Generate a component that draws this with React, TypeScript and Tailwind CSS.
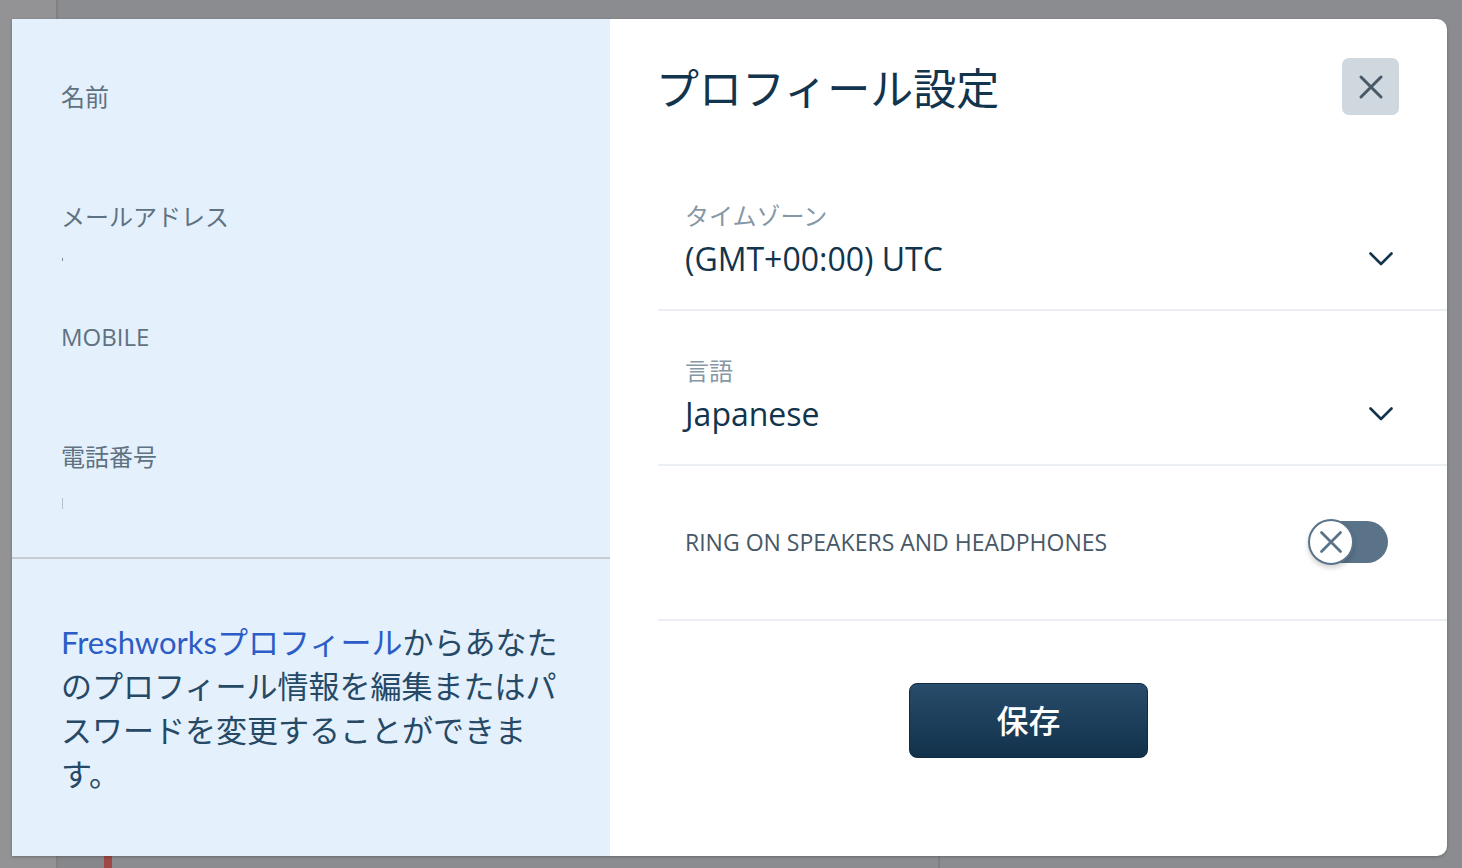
import React from "react";

function Field({ label, tick }: { label: string; tick?: "short" | "long" }) {
  return (
    <div className="flex h-[120px] flex-col">
      <div className="text-[24px] leading-[32px] text-[#5f7282]">{label}</div>
      {tick === "short" && <div className="ml-[1px] mt-[25px] h-[3px] w-px bg-[#7d8c99]" />}
      {tick === "long" && <div className="ml-[1px] mt-[25px] h-[11px] w-px bg-[#b7c1ca]" />}
    </div>
  );
}

function Chevron() {
  return (
    <svg width="24" height="14" viewBox="0 0 24 14" fill="none">
      <path d="M1.5 1.5 L12 12 L22.5 1.5" stroke="#12344d" strokeWidth="2.6" strokeLinecap="round" strokeLinejoin="round" />
    </svg>
  );
}

function SelectField({ label, value }: { label: string; value: string }) {
  return (
    <div className="flex flex-col border-b-2 border-[#ebeff3] pb-[29px] pl-[27px] pr-[54px] pt-[44px]">
      <div className="text-[24px] leading-[32px] text-[#8697a6]">{label}</div>
      <div className="mt-[6px] flex h-[42px] items-center justify-between">
        <span className="text-[32px] leading-[42px] text-[#12344d]">{value}</span>
        <Chevron />
      </div>
    </div>
  );
}

function Toggle() {
  return (
    <div className="relative h-[46px] w-[80px]">
      <div className="absolute right-0 top-[1px] h-[42px] w-[72px] rounded-full bg-[#5a7389]" />
      <div className="absolute left-0 top-[-1px] flex h-[46px] w-[46px] items-center justify-center rounded-full border-2 border-[#5a7389] bg-white shadow-[0_3px_5px_rgba(0,0,0,0.18)]">
        <svg width="24" height="24" viewBox="0 0 24 24" fill="none">
          <path d="M2.5 2.5 L21.5 21.5 M21.5 2.5 L2.5 21.5" stroke="#5a7389" strokeWidth="2.8" strokeLinecap="round" />
        </svg>
      </div>
    </div>
  );
}

export default function App() {
  return (
    <div className="relative h-[868px] w-[1462px] overflow-hidden bg-[#8b8c90] font-['Open_Sans','Noto_Sans_CJK_JP',sans-serif]">
      {/* underlying app, dimmed */}
      <div className="flex h-full">
        <div className="h-full w-[58px] border-r-2 border-[#808185] bg-[#939395]" />
        <div className="flex flex-1 flex-col">
          <div className="flex-1" />
          <div className="flex h-[12px]">
            <div className="w-[46px] bg-[#86878b]" />
            <div className="w-[8px] bg-[#a04848]" />
            <div className="w-[826px]" />
            <div className="w-[2px] bg-[#7e7f83]" />
            <div className="flex-1" />
          </div>
        </div>
      </div>

      {/* modal */}
      <div className="absolute left-[12px] top-[19px] flex h-[837px] w-[1435px] overflow-hidden rounded-r-[10px] bg-white shadow-[0_1px_3px_rgba(0,0,0,0.25)]">
        {/* left panel */}
        <div className="flex w-[598px] flex-col bg-[#e4f0fc]">
          <div className="h-[540px] border-b-2 border-[#c8ccd0] pl-[49px] pt-[62px]">
            <Field label="名前" />
            <Field label="メールアドレス" tick="short" />
            <Field label="MOBILE" />
            <Field label="電話番号" tick="long" />
          </div>
          <p className="w-[560px] pl-[49px] pt-[61px] font-['Lato','Noto_Sans_CJK_JP',sans-serif] text-[31px] leading-[44px] text-[#264966]">
            <span className="text-[#2c5cc5]">Freshworksプロフィール</span>
            からあなたのプロフィール情報を編集またはパスワードを変更することができます。
          </p>
        </div>

        {/* right panel */}
        <div className="flex flex-1 flex-col">
          <div className="flex items-start justify-between pl-[46px] pr-[48px] pt-[42px]">
            <h1 className="text-[43px] leading-[56px] text-[#12344d]">プロフィール設定</h1>
            <button className="mt-[-3px] flex h-[57px] w-[57px] items-center justify-center rounded-[7px] bg-[#cfd7df]">
              <svg width="26" height="26" viewBox="0 0 26 26" fill="none">
                <path d="M3 3 L23 23 M23 3 L3 23" stroke="#475867" strokeWidth="3" strokeLinecap="round" />
              </svg>
            </button>
          </div>

          <div className="ml-[48px] mt-[39px] flex flex-col">
            <SelectField label="タイムゾーン" value="(GMT+00:00) UTC" />
            <SelectField label="言語" value="Japanese" />
            <div className="flex h-[155px] items-center justify-between border-b-2 border-[#ebeff3] pl-[27px] pr-[59px]">
              <span className="text-[23px] text-[#475867]">RING ON SPEAKERS AND HEADPHONES</span>
              <Toggle />
            </div>
          </div>

          <button className="mx-auto mt-[62px] flex h-[75px] w-[239px] items-center justify-center rounded-[8px] border border-[#0f2c42] bg-gradient-to-b from-[#284c6b] to-[#12324b] text-[32px] font-medium text-white">
            保存
          </button>
        </div>
      </div>
    </div>
  );
}
